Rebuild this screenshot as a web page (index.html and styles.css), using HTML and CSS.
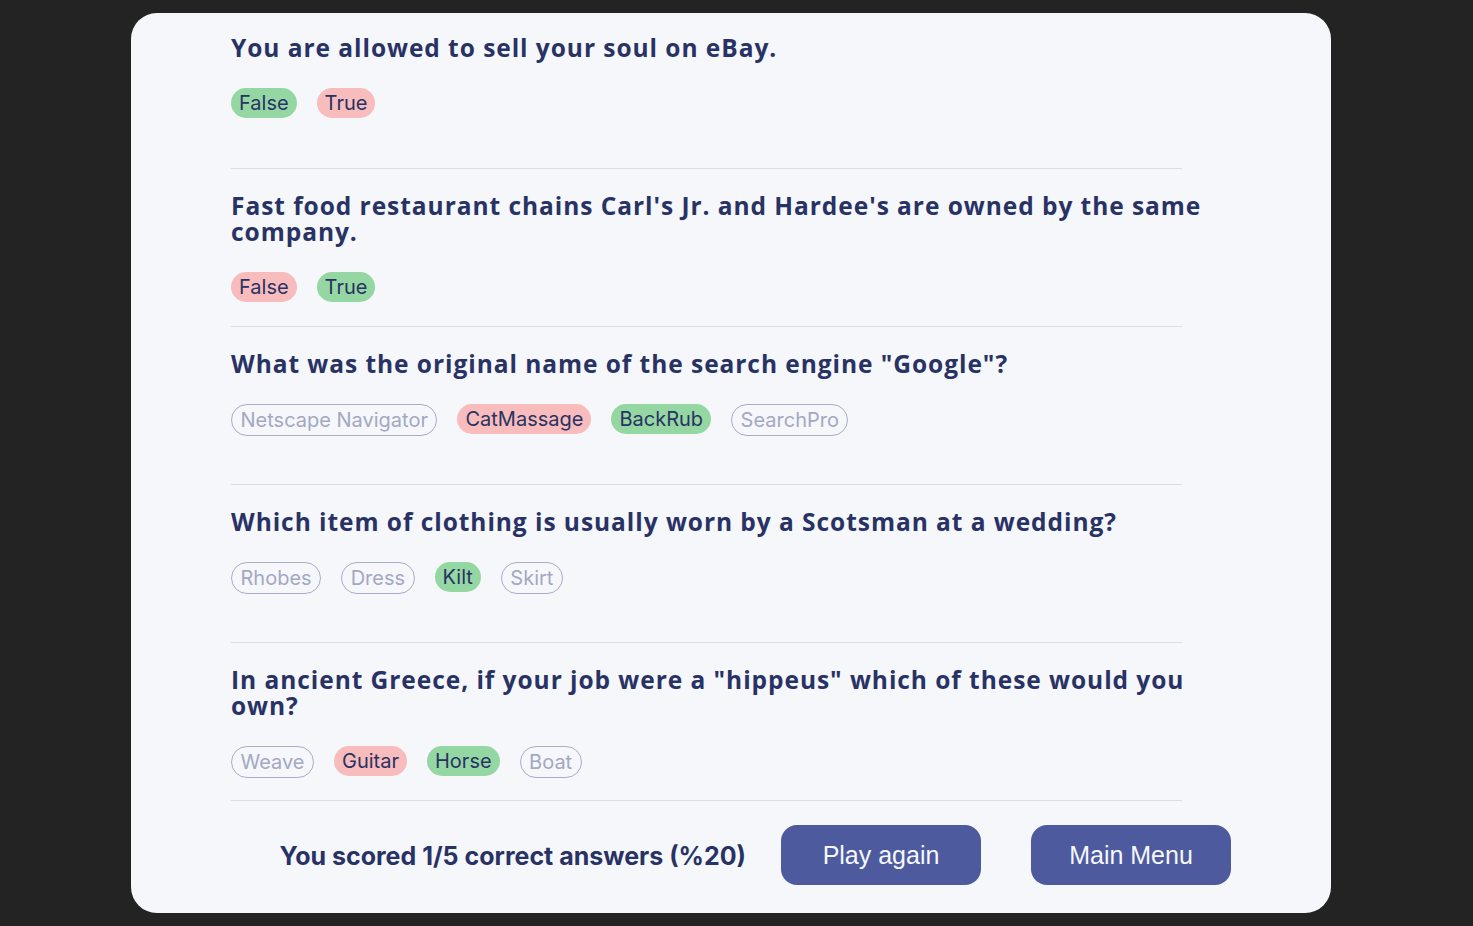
FILE: index.html
```html
<!DOCTYPE html>
<html lang="en">
<head>
<meta charset="utf-8">
<title>Quizzical</title>
<link rel="stylesheet" href="styles.css">
</head>
<body>
<main class="card">
  <section class="questions">
    <article class="question">
      <h2 class="question-title">You are allowed to sell your soul on eBay.</h2>
      <div class="answers">
        <span class="answer correct">False</span>
        <span class="answer wrong">True</span>
      </div>
      <hr class="divider">
    </article>
    <article class="question">
      <h2 class="question-title">Fast food restaurant chains Carl's Jr. and Hardee's are owned by the same company.</h2>
      <div class="answers">
        <span class="answer wrong">False</span>
        <span class="answer correct">True</span>
      </div>
      <hr class="divider">
    </article>
    <article class="question">
      <h2 class="question-title">What was the original name of the search engine "Google"?</h2>
      <div class="answers">
        <span class="answer faded">Netscape Navigator</span>
        <span class="answer wrong">CatMassage</span>
        <span class="answer correct">BackRub</span>
        <span class="answer faded">SearchPro</span>
      </div>
      <hr class="divider">
    </article>
    <article class="question">
      <h2 class="question-title">Which item of clothing is usually worn by a Scotsman at a wedding?</h2>
      <div class="answers">
        <span class="answer faded">Rhobes</span>
        <span class="answer faded">Dress</span>
        <span class="answer correct">Kilt</span>
        <span class="answer faded">Skirt</span>
      </div>
      <hr class="divider">
    </article>
    <article class="question">
      <h2 class="question-title">In ancient Greece, if your job were a "hippeus" which of these would you own?</h2>
      <div class="answers">
        <span class="answer faded">Weave</span>
        <span class="answer wrong">Guitar</span>
        <span class="answer correct">Horse</span>
        <span class="answer faded">Boat</span>
      </div>
      <hr class="divider">
    </article>
  </section>
  <footer class="results">
    <p class="score">You scored 1/5 correct answers (%20)</p>
    <button class="btn">Play again</button>
    <button class="btn">Main Menu</button>
  </footer>
</main>
</body>
</html>
```
FILE: styles.css
```css
* { box-sizing: border-box; }
html, body { margin: 0; padding: 0; }
body {
  background: #232323;
  min-height: 926px;
  padding-top: 13px;
}
.card {
  width: 1200px;
  height: 900px;
  margin-left: 131px;
  background: #f5f7fb;
  border-radius: 26px;
  padding: 0 100px;
  display: flex;
  flex-direction: column;
}
.questions {
  margin-top: -2px;
  width: 1000px;
}
.question {
  height: 158px;
  padding-top: 24px;
  display: flex;
  flex-direction: column;
}
.question-title {
  margin: 0;
  font-family: "Open Sans", "Liberation Sans", sans-serif;
  font-weight: 700;
  font-size: 24.5px;
  line-height: 26px;
  letter-spacing: 0.95px;
  color: #293264;
}
.answers {
  display: flex;
  align-items: flex-start;
  gap: 20px;
  margin-top: 27px;
}
.answer {
  font-family: Inter, "Noto Sans", sans-serif;
  font-size: 20px;
  line-height: 22px;
  padding: 4px 8px;
  border-radius: 16px;
  color: #293264;
}
.answer.correct { background: #94d7a2; }
.answer.wrong { background: #f8bcbc; }
.answer.faded {
  border: 1.5px solid #a7acca;
  color: #a3a8c3;
  padding: 4px 8.5px;
}
.divider {
  margin: auto 0 0 0;
  width: 951px;
  border: 0;
  height: 1px;
  background: #dbdee9;
}
.results {
  display: flex;
  align-items: center;
  justify-content: flex-end;
  gap: 50px;
  margin-top: 24px;
}
.score {
  margin: 2px -15px 0 0;
  font-family: Inter, "Noto Sans", sans-serif;
  font-weight: 700;
  font-size: 25px;
  color: #293264;
}
.btn {
  width: 200px;
  height: 60px;
  border: 0;
  border-radius: 16px;
  background: #4d5b9e;
  color: #f5f7fb;
  font-family: "Liberation Sans", Arial, sans-serif;
  font-size: 25px;
}
```
